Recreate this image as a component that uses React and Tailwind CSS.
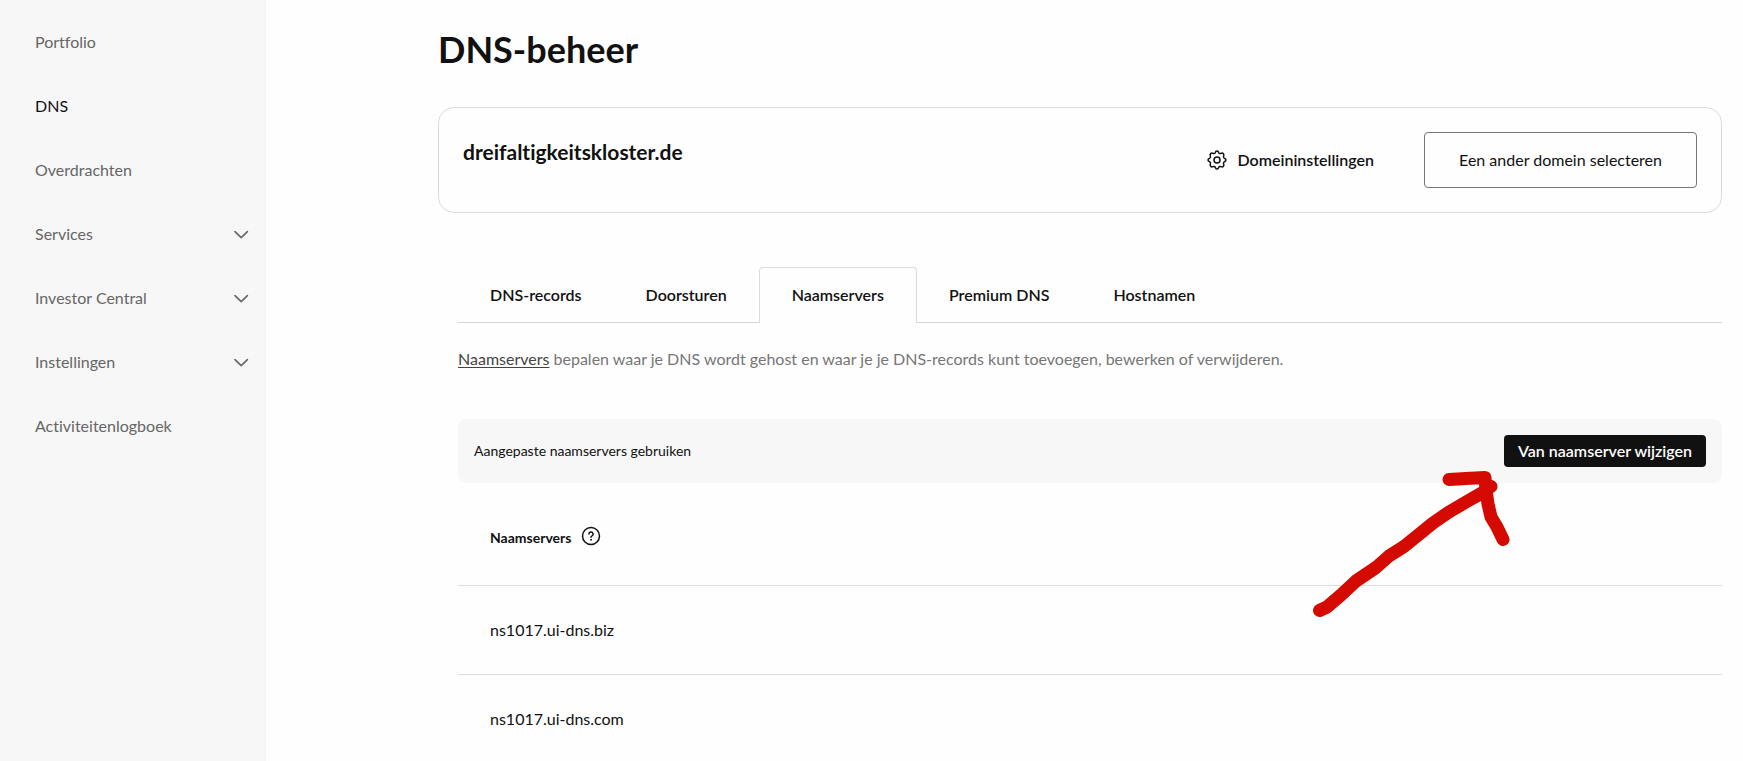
import React from 'react';

const navItems = [
  { label: 'Portfolio' },
  { label: 'DNS', active: true },
  { label: 'Overdrachten' },
  { label: 'Services', expandable: true },
  { label: 'Investor Central', expandable: true },
  { label: 'Instellingen', expandable: true },
  { label: 'Activiteitenlogboek' },
];

const tabs = ['DNS-records', 'Doorsturen', 'Naamservers', 'Premium DNS', 'Hostnamen'];
const activeTab = 'Naamservers';
const nameservers = ['ns1017.ui-dns.biz', 'ns1017.ui-dns.com'];

function ChevronIcon() {
  return (
    <svg className="h-4 w-4" viewBox="0 0 16 16" fill="none" stroke="#666" strokeWidth="1.6" strokeLinecap="round" strokeLinejoin="round" aria-hidden="true">
      <path d="M2 5.600l6.200 6L14.400 5.600" />
    </svg>
  );
}

function GearIcon() {
  return (
    <svg className="h-5 w-5 shrink-0" viewBox="0 0 20 20" fill="none" stroke="#111" strokeWidth="1.5" strokeLinejoin="round" aria-hidden="true">
      <path d="M8.300 2.700Q8.600 1 10 1T11.700 2.700Q12 3.700 13.900 3.400Q15.400 2.600 16.360 3.640T16.600 6.100Q16.100 7.200 17.300 8.300Q19 8.700 19 10T17.300 11.700Q16.100 12.800 16.600 13.900Q17.400 15.400 16.360 16.360T13.900 16.600Q12.200 16.200 11.700 17.300Q11.300 19 10 19T8.300 17.300Q7.800 16.200 6.100 16.600Q4.600 17.400 3.640 16.360T3.400 13.900Q3.900 12.800 2.700 11.700Q1 11.300 1 10T2.700 8.300Q3.900 7.200 3.400 6.100Q2.600 4.600 3.640 3.640T6.100 3.400Q7.800 3.800 8.300 2.700Z" />
      <circle cx="10" cy="10" r="3" />
    </svg>
  );
}

function HelpIcon() {
  return (
    <svg className="h-5 w-5" viewBox="0 0 20 20" fill="none" stroke="#111" strokeWidth="1.5" strokeLinecap="round" strokeLinejoin="round" aria-hidden="true">
      <circle cx="10" cy="10" r="8.500" />
      <path d="M7.900 8a2.100 2.100 0 1 1 3.100 1.900c-.7.400-1 .7-1 1.400" />
      <circle cx="10" cy="13.800" r=".5" fill="#111" strokeWidth=".8" />
    </svg>
  );
}

function HandDrawnArrow() {
  return (
    <svg
      className="pointer-events-none absolute top-[51px] right-52 h-[150px] w-[204px]"
      viewBox="1310 470 204 150"
      fill="none"
      stroke="#d40a00"
      strokeWidth="13"
      strokeLinecap="round"
      strokeLinejoin="round"
      aria-hidden="true"
    >
      <path d="M1319.500 610.500L1327 607L1341 595L1356 581L1376 567.500L1389 556L1404 546.500L1417 536L1433 523L1449 512L1466 502L1481 493.500L1491 486.500" />
      <path d="M1449 479.500L1466 478.500L1485 477.500L1486 490L1488 504L1491 517L1497 527L1503 539.500" />
    </svg>
  );
}

export default function App() {
  return (
    <div className="flex h-screen overflow-hidden bg-[#fefefe] font-['Lato',sans-serif] text-base leading-6 text-[#111] [font-variant-ligatures:none]">
      <aside className="w-[266px] shrink-0 border-r border-[#f2f2f2] bg-[#f7f7f7] pt-[10px]">
        <nav>
          {navItems.map((item) => {
            const rowClass = 'flex h-16 w-full items-center justify-between pr-4 pl-[35px] text-left';
            return item.expandable ? (
              <button key={item.label} type="button" aria-expanded="false" className={`${rowClass} text-[#666]`}>
                {item.label}
                <ChevronIcon />
              </button>
            ) : (
              <a key={item.label} href="#" className={`${rowClass} ${item.active ? 'text-[#111]' : 'text-[#666]'}`}>
                {item.label}
              </a>
            );
          })}
        </nav>
      </aside>

      <main className="min-w-0 flex-1 pt-[27px] pr-[21px] pl-[172px]">
        <h1 className="text-4xl leading-[44px] font-bold">DNS-beheer</h1>

        <section className="mt-9 flex justify-between rounded-2xl border border-[#dcdcdc] p-6">
          <h2 className="mt-1.5 text-[21px] leading-7 font-bold">dreifaltigkeitskloster.de</h2>
          <div className="flex items-center gap-[50px]">
            <button type="button" className="flex items-center gap-2.5 font-semibold">
              <GearIcon />
              Domeininstellingen
            </button>
            <button type="button" className="h-14 rounded-sm border border-[#767676] px-[34px]">
              Een ander domein selecteren
            </button>
          </div>
        </section>

        <div className="mt-[54px] pl-5">
          <div role="tablist" className="flex border-b border-[#d6d6d6]">
            {tabs.map((tab) => (
              <button
                key={tab}
                type="button"
                role="tab"
                aria-selected={tab === activeTab}
                className={
                  tab === activeTab
                    ? '-mb-px h-14 rounded-t border border-b-0 border-[#dcdcdc] bg-[#fefefe] px-8 pb-0.5 font-semibold'
                    : 'h-[55px] px-8 pt-px font-semibold'
                }
              >
                {tab}
              </button>
            ))}
          </div>

          <p className="mt-6 text-[#767676]">
            <a href="#" className="text-[#444] underline underline-offset-2">Naamservers</a> bepalen waar je DNS wordt gehost en waar je je DNS-records kunt toevoegen, bewerken of verwijderen.
          </p>

          <div className="relative mt-12">
            <div className="flex h-16 items-center justify-between rounded-lg bg-[#f7f7f7] px-4">
              <span className="text-sm">Aangepaste naamservers gebruiken</span>
              <button type="button" className="h-8 rounded-sm bg-[#111] px-3.5 font-semibold text-white">
                Van naamserver wijzigen
              </button>
            </div>

            <table className="w-full border-collapse text-left">
              <thead>
                <tr className="h-[102px] border-b border-[#dcdfe1]">
                  <th scope="col" className="px-8 pt-2 text-sm font-bold">
                    <span className="flex items-center gap-2.5">
                      Naamservers
                      <button type="button" aria-label="Uitleg over naamservers" className="pb-1">
                        <HelpIcon />
                      </button>
                    </span>
                  </th>
                </tr>
              </thead>
              <tbody>
                {nameservers.map((name) => (
                  <tr key={name} className="h-[89px] border-b border-[#dcdfe1]">
                    <td className="px-8">{name}</td>
                  </tr>
                ))}
              </tbody>
            </table>
            <HandDrawnArrow />
          </div>
        </div>
      </main>
    </div>
  );
}
